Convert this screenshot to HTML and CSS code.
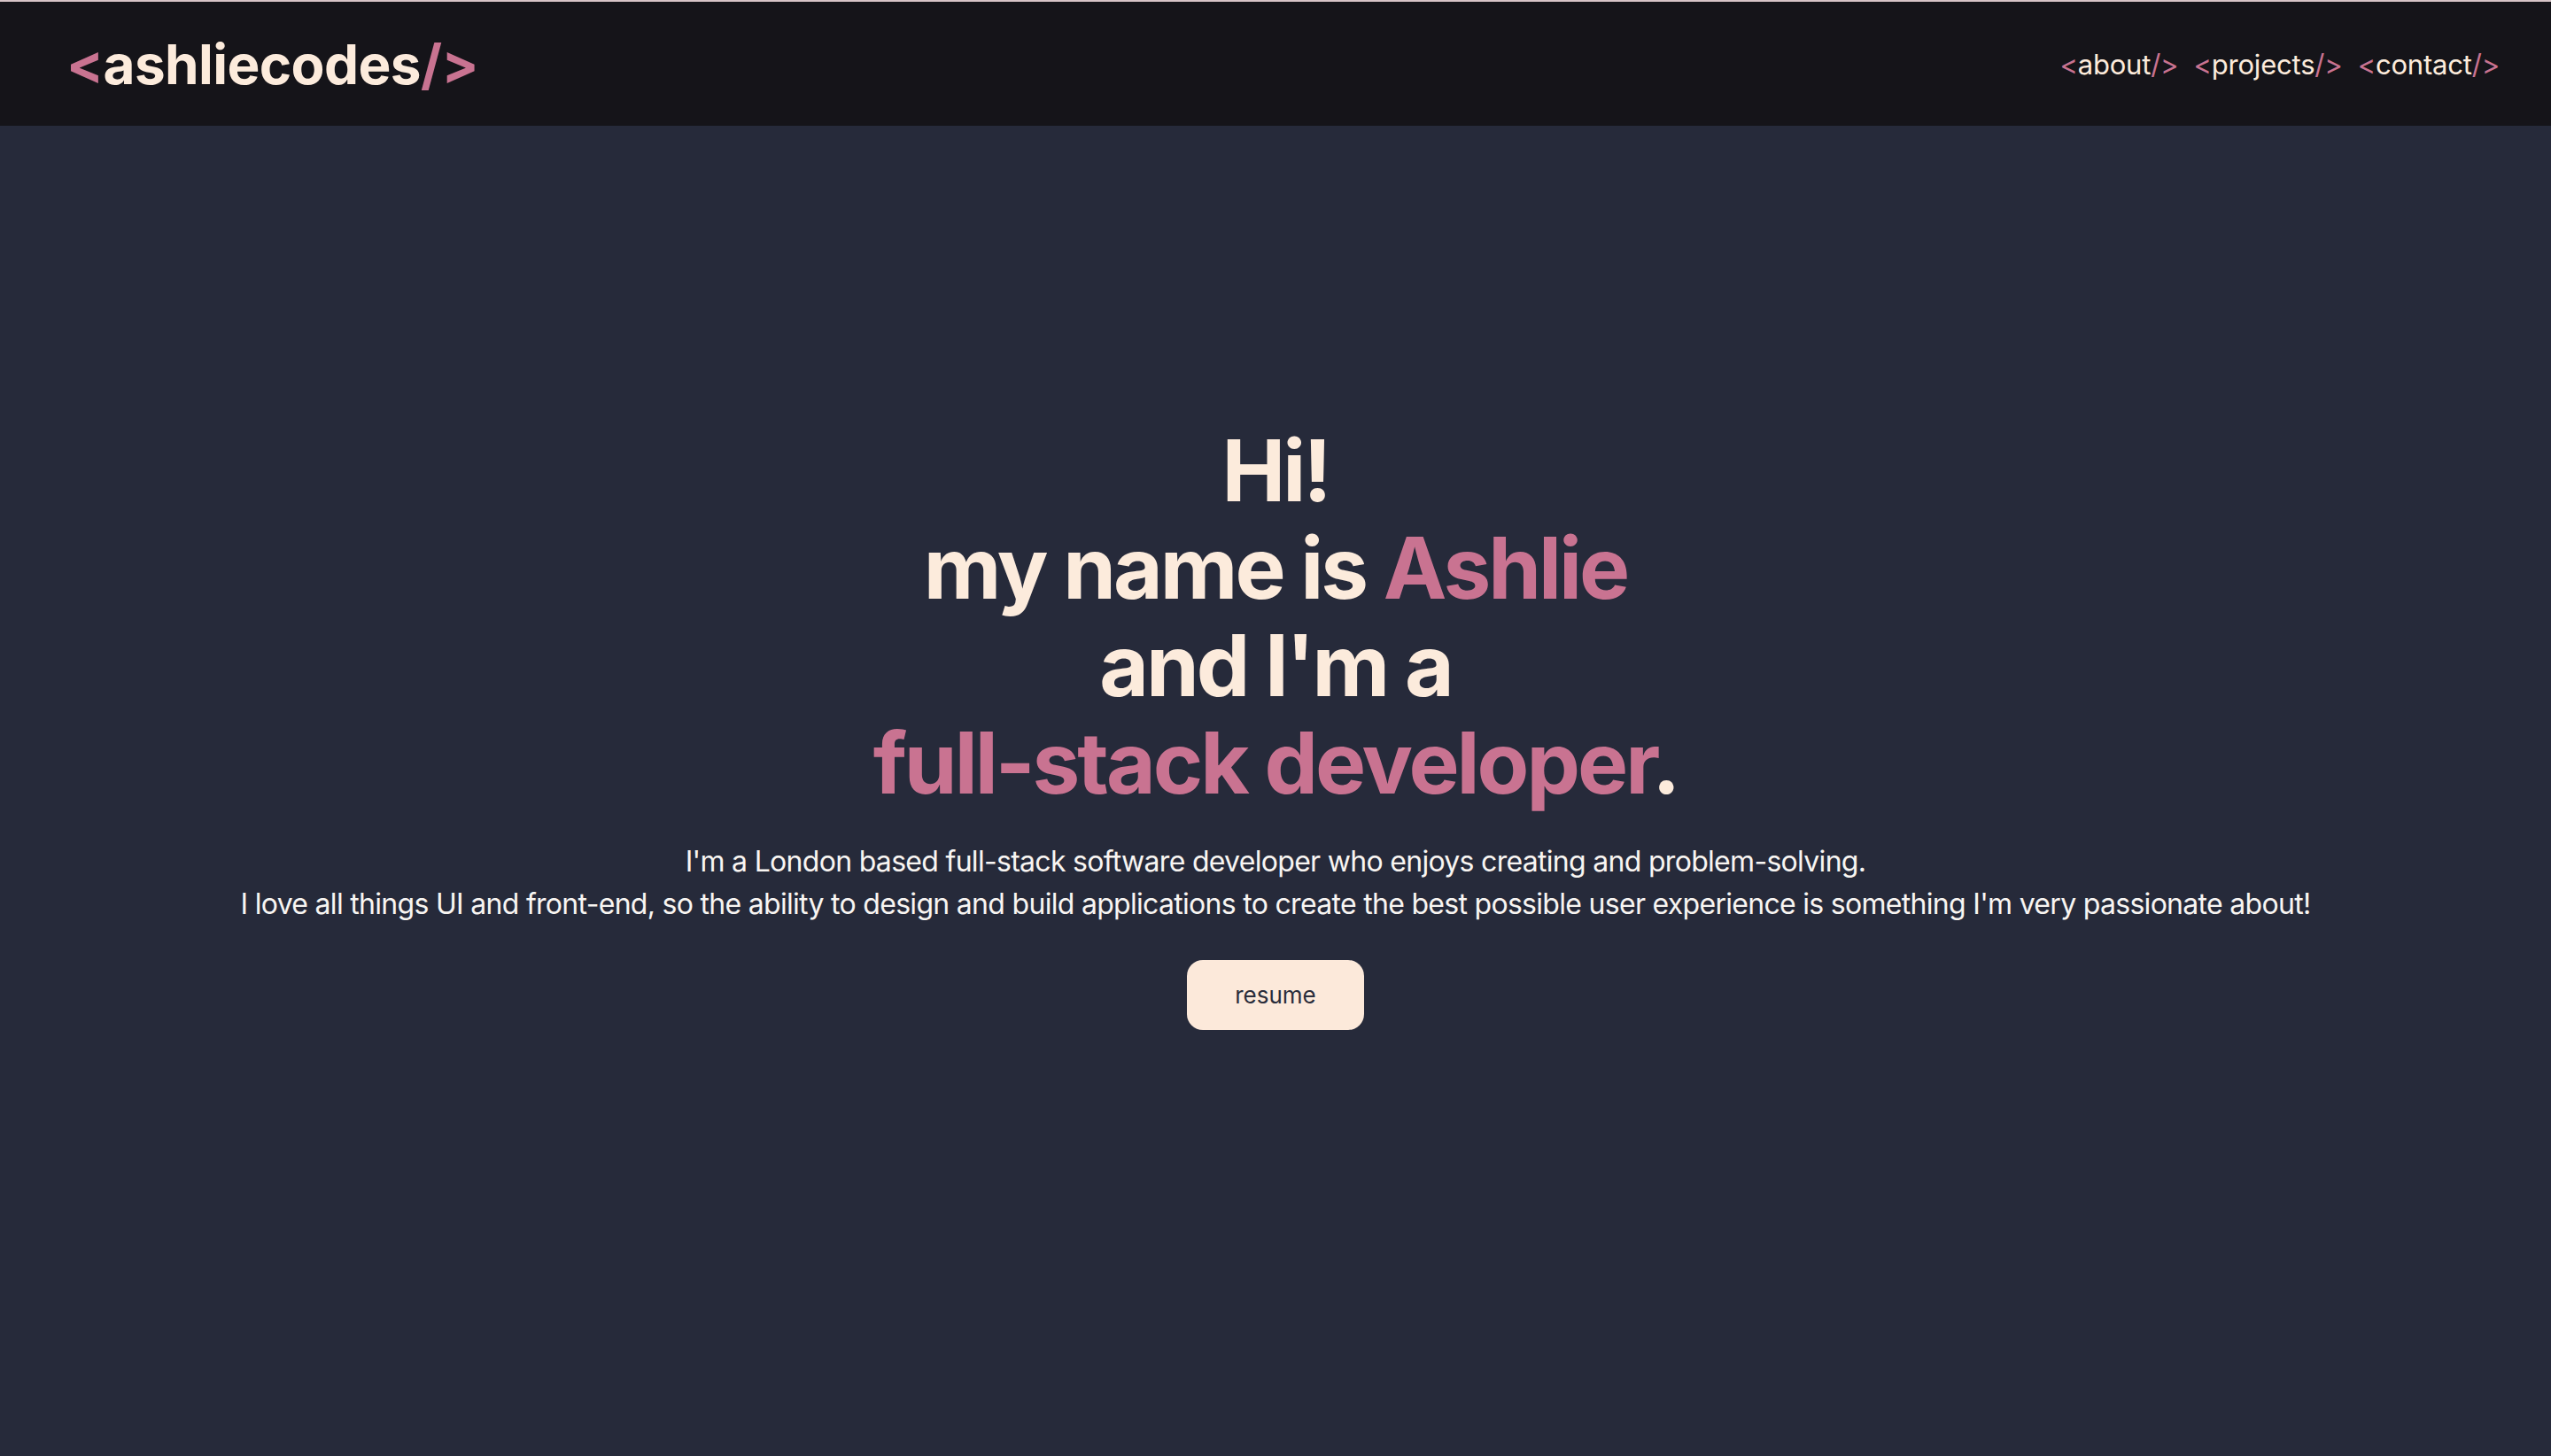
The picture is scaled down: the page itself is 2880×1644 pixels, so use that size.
FILE: index.html
```html
<!DOCTYPE html>
<html lang="en">
<head>
<meta charset="utf-8">
<title>ashliecodes</title>
<link rel="stylesheet" href="styles.css">
</head>
<body>
<header class="topbar">
  <a class="logo" href="#"><span class="pink">&lt;</span>ashliecodes<span class="pink">/&gt;</span></a>
  <nav class="nav">
    <a href="#about"><span class="pink">&lt;</span>about<span class="pink">/&gt;</span></a>
    <a href="#projects"><span class="pink">&lt;</span>projects<span class="pink">/&gt;</span></a>
    <a href="#contact"><span class="pink">&lt;</span>contact<span class="pink">/&gt;</span></a>
  </nav>
</header>
<main class="hero">
  <h1 class="headline">Hi!<br>my name is <span class="pink">Ashlie</span><br>and I'm a<br><span class="pink">full-stack developer</span>.</h1>
  <p class="intro">I'm a London based full-stack software developer who enjoys creating and problem-solving.<br>I love all things UI and front-end, so the ability to design and build applications to create the best possible user experience is something I'm very passionate about!</p>
  <button class="resume">resume</button>
</main>
</body>
</html>
```
FILE: styles.css
```css
* { box-sizing: border-box; }
html, body { margin: 0; padding: 0; }
body {
  background: #262a3a;
  min-height: 1644px;
  font-family: Inter, "Noto Sans", sans-serif;
  color: #fcebdc;
}
.pink { color: #c97391; }
.topbar {
  height: 142px;
  border-top: 2px solid #d6c4c7;
  background: #151419;
  display: flex;
  align-items: center;
  justify-content: space-between;
  padding: 0 58px 0 75px;
}
.logo {
  color: #fcebdc;
  text-decoration: none;
  font-weight: 700;
  font-size: 62px;
  letter-spacing: -0.6px;
}
.nav {
  display: flex;
  gap: 17px;
}
.nav a {
  color: #fcebdc;
  text-decoration: none;
  font-size: 31px;
  letter-spacing: -0.2px;
}
.hero {
  display: flex;
  flex-direction: column;
  align-items: center;
  padding-top: 334px;
  text-align: center;
}
.headline {
  margin: 0;
  font-size: 96px;
  line-height: 110px;
  font-weight: 700;
  letter-spacing: -3px;
}
.intro {
  margin: 33px 0 0;
  font-size: 32px;
  line-height: 48px;
  letter-spacing: -0.7px;
  color: #f8f5f2;
}
.resume {
  margin-top: 39px;
  width: 200px;
  height: 79px;
  border: 0;
  border-radius: 18px;
  background: #fce9da;
  color: #2a2d3b;
  font-family: Inter, "Noto Sans", sans-serif;
  font-size: 26px;
}
```
